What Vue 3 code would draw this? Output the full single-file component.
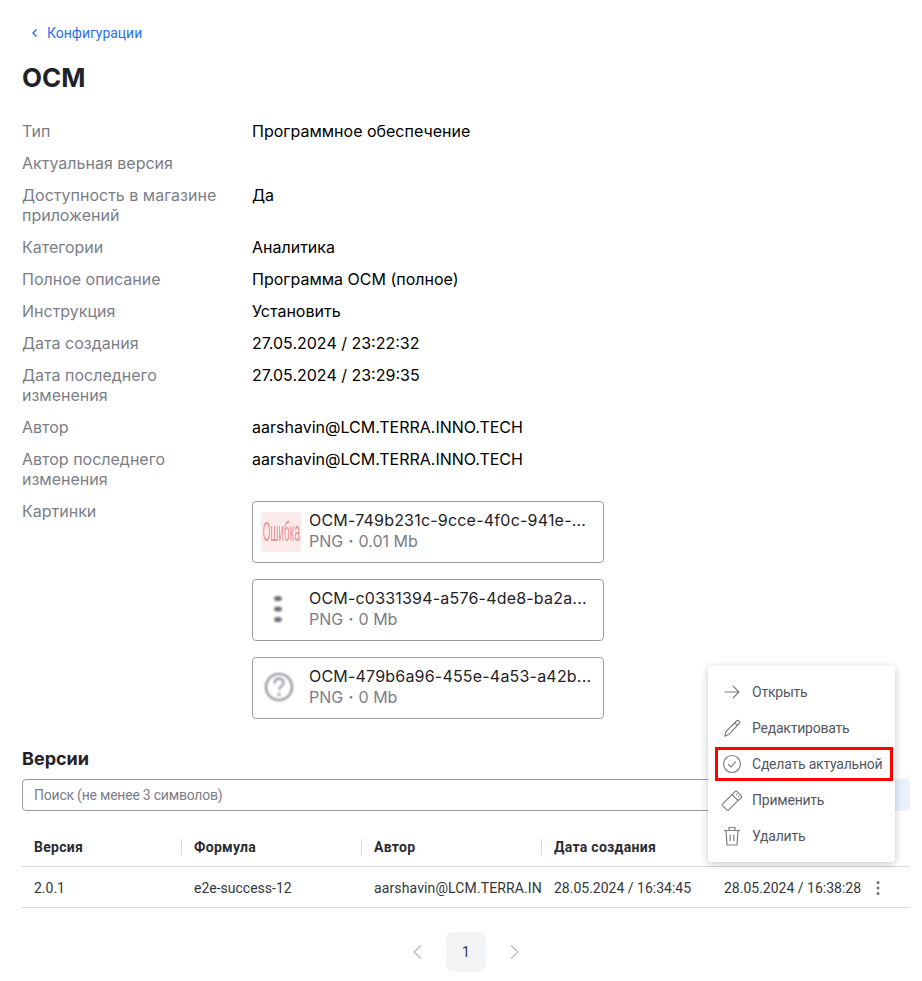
<script setup>
const details = [
  { label: 'Тип', value: 'Программное обеспечение' },
  { label: 'Актуальная версия', value: '' },
  { label: 'Доступность в магазине приложений', value: 'Да' },
  { label: 'Категории', value: 'Аналитика' },
  { label: 'Полное описание', value: 'Программа ОСМ (полное)' },
  { label: 'Инструкция', value: 'Установить' },
  { label: 'Дата создания', value: '27.05.2024 / 23:22:32' },
  { label: 'Дата последнего изменения', value: '27.05.2024 / 23:29:35' },
  { label: 'Автор', value: 'aarshavin@LCM.TERRA.INNO.TECH' },
  { label: 'Автор последнего изменения', value: 'aarshavin@LCM.TERRA.INNO.TECH' }
]

const files = [
  { name: 'OCM-749b231c-9cce-4f0c-941e-...', size: '0.01 Mb', thumb: 'error' },
  { name: 'OCM-c0331394-a576-4de8-ba2a...', size: '0 Mb', thumb: 'dots' },
  { name: 'OCM-479b6a96-455e-4a53-a42b...', size: '0 Mb', thumb: 'question' }
]

const columns = ['Версия', 'Формула', 'Автор', 'Дата создания', 'Дата изменения']

const menu = [
  { label: 'Открыть', icon: 'arrow' },
  { label: 'Редактировать', icon: 'pencil' },
  { label: 'Сделать актуальной', icon: 'check', marked: true },
  { label: 'Применить', icon: 'usb' },
  { label: 'Удалить', icon: 'trash' }
]
</script>

<template>
  <div class="page">
    <a class="back">
      <svg width="16" height="16" viewBox="0 0 16 16" fill="none" stroke="#2b6ff0" stroke-width="1.4">
        <path d="M9.5 4.5 6 8l3.5 3.5" />
      </svg>
      <span>Конфигурации</span>
    </a>

    <h1 class="title">OCM</h1>

    <div class="details">
      <div v-for="row in details" :key="row.label" class="detail-row">
        <div class="detail-label">{{ row.label }}</div>
        <div class="detail-value">{{ row.value }}</div>
      </div>
      <div class="detail-row">
        <div class="detail-label">Картинки</div>
        <div class="files">
          <div v-for="file in files" :key="file.name" class="file">
            <div class="thumb">
              <div v-if="file.thumb === 'error'" class="thumb-error"><span>Ошибка</span></div>
              <svg v-else-if="file.thumb === 'dots'" class="thumb-blur" width="40" height="40" viewBox="0 0 40 40" fill="#6a6d75">
                <ellipse cx="17" cy="8.500" rx="4" ry="2.600" />
                <ellipse cx="17" cy="19" rx="4" ry="2.600" />
                <ellipse cx="17" cy="29.500" rx="4" ry="2.600" />
              </svg>
              <svg v-else class="thumb-blur" width="40" height="40" viewBox="0 0 40 40" fill="none" stroke="#8a8c93">
                <circle cx="18" cy="19" r="13" stroke-width="2.200" />
                <path d="M13.500 15.500c0-3 2-4.800 4.600-4.800 2.700 0 4.500 1.800 4.500 4 0 3.600-4.500 3.600-4.500 7.300" stroke-width="2" />
                <circle cx="18" cy="26.500" r="1.500" fill="#8a8c93" stroke="none" />
              </svg>
            </div>
            <div class="file-text">
              <div class="file-name">{{ file.name }}</div>
              <div class="file-meta">PNG<span class="dot">·</span>{{ file.size }}</div>
            </div>
          </div>
        </div>
      </div>
    </div>

    <h2 class="subtitle">Версии</h2>

    <div class="search">
      <input class="search-input" placeholder="Поиск (не менее 3 символов)" />
      <div class="search-btn"></div>
    </div>

    <div class="table">
      <div class="tr head">
        <div v-for="col in columns" :key="col" class="th"><span>{{ col }}</span></div>
      </div>
      <div class="tr">
        <div class="td">2.0.1</div>
        <div class="td">e2e-success-12</div>
        <div class="td author">aarshavin@LCM.TERRA.INNO.TECH</div>
        <div class="td">28.05.2024 / 16:34:45</div>
        <div class="td last">
          <span>28.05.2024 / 16:38:28</span>
          <svg class="kebab" width="4" height="16" viewBox="0 0 4 16" fill="#6f727b">
            <circle cx="2" cy="2.500" r="1.500" />
            <circle cx="2" cy="8" r="1.500" />
            <circle cx="2" cy="13.500" r="1.500" />
          </svg>
        </div>
      </div>
    </div>

    <div class="pager">
      <div class="pager-arrow">
        <svg width="14" height="18" viewBox="0 0 14 18" fill="none" stroke="#b6b8be" stroke-width="1.2"><path d="M11 2.500 4 9l7 6.500" /></svg>
      </div>
      <div class="pager-page">1</div>
      <div class="pager-arrow">
        <svg width="14" height="18" viewBox="0 0 14 18" fill="none" stroke="#b6b8be" stroke-width="1.2"><path d="M3 2.500 10 9l-7 6.500" /></svg>
      </div>
    </div>

    <div class="menu">
      <div v-for="item in menu" :key="item.label" class="menu-item" :class="{ marked: item.marked }">
        <svg class="menu-icon" width="24" height="24" viewBox="0 0 24 24" fill="none" stroke="#7c7f87" stroke-width="1.200">
          <path v-if="item.icon === 'arrow'" d="M4.500 12h14.500M13 6l6 6-6 6" />
          <path v-else-if="item.icon === 'pencil'" d="M5 20l1-4.500L16.500 5c.8-.8 2-.8 2.700 0 .8.800.8 1.900 0 2.700L8.800 18.500 5 20zM15 6.800l3 3" />
          <template v-else-if="item.icon === 'check'">
            <circle cx="12" cy="12" r="8.500" />
            <path d="M8.200 12.300l2.800 2.700 4.800-5.300" />
          </template>
          <template v-else-if="item.icon === 'usb'">
            <path d="M2.800 15.800 12 6.600l6 6-9.200 9.200c-.7.600-1.300.600-2 0l-4-4c-.6-.7-.6-1.300 0-2z" />
            <path d="M12 6.600l3.400-3.400c.4-.3.800-.3 1.100 0l5 5c.3.300.3.700 0 1.100L18 12.600M16.300 6l.9.900M18.300 8l.9.900" />
          </template>
          <template v-else>
            <path d="M4 6.500h16M9 6.500V3.500h6v3M6 6.500 7 21h10l1-14.500M10.200 10.500v6.500M13.800 10.500v6.500" />
          </template>
        </svg>
        <span>{{ item.label }}</span>
      </div>
    </div>
  </div>
</template>

<style scoped>
.page {
  position: relative;
  box-sizing: border-box;
  width: 922px;
  min-height: 981px;
  padding: 24px 12px 9px 22px;
  background: #fff;
  font-family: Inter, "Noto Sans", sans-serif;
  color: #000;
}

.back {
  display: flex;
  align-items: center;
  gap: 4px;
  height: 18px;
  padding-left: 5px;
  color: #2b6ff0;
  font-family: Roboto, sans-serif;
  font-size: 14px;
  line-height: 18px;
  letter-spacing: -0.03px;
}

.title {
  margin: 16px 0 0;
  font-size: 26px;
  line-height: 40px;
  font-weight: 700;
  color: #1f2228;
}

.details {
  display: flex;
  flex-direction: column;
  gap: 12px;
  margin-top: 23px;
  font-size: 16px;
  line-height: 20px;
}

.detail-row {
  display: flex;
}

.detail-label {
  flex: none;
  width: 230px;
  padding-right: 12px;
  box-sizing: border-box;
  color: #7b7e87;
}

.files {
  display: flex;
  flex-direction: column;
  gap: 16px;
}

.file {
  box-sizing: border-box;
  display: flex;
  align-items: center;
  gap: 8px;
  width: 352px;
  height: 62px;
  padding: 0 8px;
  border: 1px solid #9a9ca3;
  border-radius: 4px;
}

.thumb {
  flex: none;
  width: 40px;
  height: 40px;
}

.thumb-error {
  display: flex;
  align-items: center;
  justify-content: center;
  width: 40px;
  height: 40px;
  overflow: hidden;
  border-radius: 3px;
  background: #fdeaea;
  color: #ea8f96;
  font-family: "Liberation Sans", sans-serif;
  font-size: 27px;
}

.thumb-error span {
  display: block;
  flex: none;
  transform: scaleX(0.37);
  filter: blur(0.5px);
}

.thumb-blur {
  filter: blur(1px);
}

.file-text {
  margin-top: -4px;
}

.file-name {
  line-height: 20px;
  letter-spacing: 0.2px;
  color: #1f2228;
}

.file-meta {
  margin-top: 1px;
  line-height: 20px;
  color: #7b7e87;
}

.dot {
  margin: 0 5px;
  font-weight: 700;
}

.subtitle {
  margin: 29px 0 0;
  font-size: 18px;
  line-height: 22px;
  font-weight: 700;
  color: #1f2228;
}

.search {
  display: flex;
  gap: 2px;
  margin-top: 9px;
}

.search-input {
  flex: 1;
  min-width: 0;
  box-sizing: border-box;
  height: 32px;
  padding: 0 11px;
  border: 1px solid #9a9ca3;
  border-radius: 4px;
  outline: none;
  font-family: Roboto, sans-serif;
  font-size: 14px;
  letter-spacing: -0.22px;
}

.search-input::placeholder {
  color: #7b7e87;
  opacity: 1;
}

.search-btn {
  flex: none;
  width: 32px;
  height: 32px;
  border-radius: 4px;
  background: #e9f1fd;
}

.table {
  margin-top: 16px;
  font-family: Roboto, sans-serif;
  font-size: 14px;
  color: #33363d;
}

.tr {
  display: grid;
  grid-template-columns: 160px 180px 180px 170px 198px;
  align-items: center;
  height: 41px;
  border-bottom: 1px solid #d8d9dd;
  box-sizing: border-box;
}

.tr.head {
  height: 40px;
  font-weight: 700;
  letter-spacing: 0.3px;
  color: #2a2c32;
}

.th {
  padding-left: 12px;
  border-left: 1px solid #d8d9dd;
  line-height: 16px;
  white-space: nowrap;
  overflow: hidden;
}

.th:first-child {
  border-left: 0;
}

.th:not(:first-child) {
  margin-left: -1px;
}

.td {
  padding: 1px 0 0 12px;
  white-space: nowrap;
  overflow: hidden;
}

.td.author {
  letter-spacing: 0.12px;
}

.td.last {
  display: flex;
  align-items: center;
  justify-content: space-between;
  padding-right: 30px;
}

.pager {
  display: flex;
  justify-content: center;
  gap: 9px;
  margin-top: 24px;
}

.pager-arrow,
.pager-page {
  display: flex;
  align-items: center;
  justify-content: center;
  width: 40px;
  height: 40px;
}

.pager-page {
  border-radius: 8px;
  background: #f2f3f5;
  font-family: Roboto, sans-serif;
  font-size: 14px;
  color: #33363d;
}

.menu {
  position: absolute;
  left: 708px;
  top: 666px;
  box-sizing: border-box;
  width: 187px;
  padding: 8px 0;
  border-radius: 4px;
  background: #fff;
  box-shadow: 0 2px 8px rgba(0, 0, 0, 0.22);
  font-family: Roboto, sans-serif;
  font-size: 14px;
  letter-spacing: -0.22px;
  color: #55585f;
}

.menu-item {
  position: relative;
  display: flex;
  align-items: center;
  gap: 8px;
  height: 36px;
  padding-left: 12px;
}

.menu-item.marked::after {
  content: "";
  position: absolute;
  left: 7px;
  top: 1px;
  width: 178px;
  height: 34px;
  box-sizing: border-box;
  border: 3px solid #f00;
}
</style>
